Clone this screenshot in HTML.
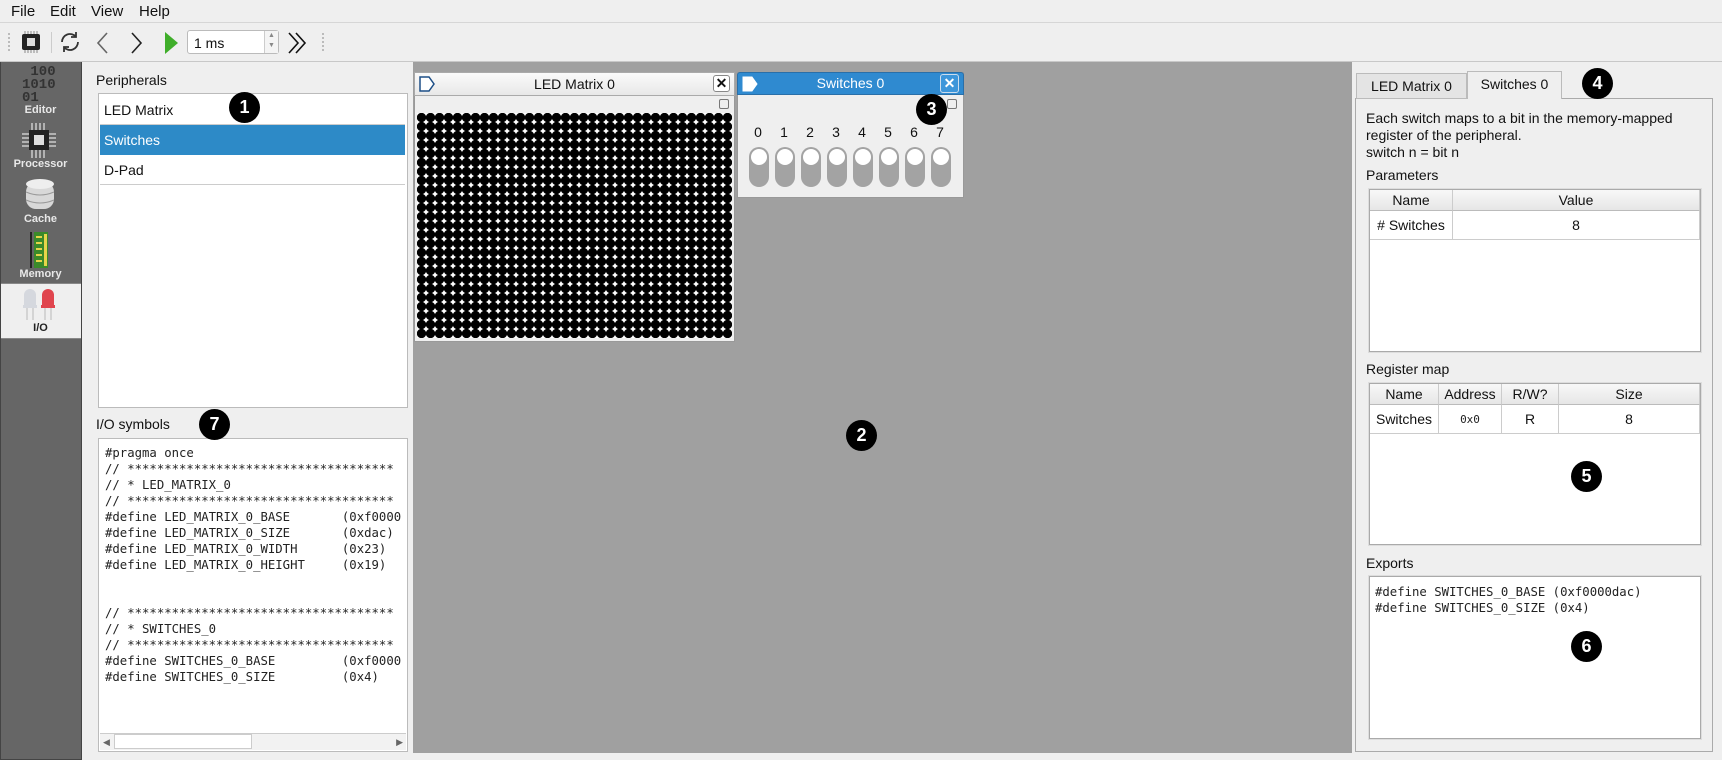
<!DOCTYPE html>
<html><head><meta charset="utf-8">
<style>
*{box-sizing:border-box;margin:0;padding:0}
body{width:1722px;height:760px;overflow:hidden;background:#efefef;font-family:"Liberation Sans",sans-serif;font-size:14px;color:#111;position:relative}
.a{position:absolute}
.mono{font-family:"DejaVu Sans Mono","Liberation Mono",monospace;font-size:12.3px;color:#222}
.circ{position:absolute;width:31px;height:31px;border-radius:50%;background:#000;color:#fff;font-weight:bold;font-size:18px;text-align:center;line-height:31px}
.sb{color:#e8e8e8;font-size:11px;font-weight:bold;text-align:center;width:81px;left:0}
.th{position:absolute;top:0;height:21px;background:linear-gradient(#f8f8f8,#e6e6e6);border-right:1px solid #ccc;border-bottom:1px solid #bbb;text-align:center;line-height:21px;font-size:14px}
.td{position:absolute;height:29px;border-right:1px solid #ccc;border-bottom:1px solid #ccc;text-align:center;line-height:29px;font-size:14px}
.sw{position:absolute;top:147px;width:20px;height:40px;border-radius:10px;background:#a3a3a3}
.sw::after{content:"";position:absolute;left:2px;top:2px;width:16px;height:16px;border-radius:50%;background:#fff}
.sl{position:absolute;top:124px;font-size:14px;width:12px;text-align:center}
</style></head><body>
<!-- menu -->
<div class="a" style="left:0;top:0;width:1722px;height:23px;background:#efefef;border-bottom:1px solid #d6d6d6"></div>
<div class="a" style="left:11px;top:3px;font-size:15px;word-spacing:0">File</div>
<div class="a" style="left:50px;top:3px;font-size:15px">Edit</div>
<div class="a" style="left:91px;top:3px;font-size:15px">View</div>
<div class="a" style="left:139px;top:3px;font-size:15px">Help</div>
<!-- toolbar -->
<div class="a" style="left:0;top:23px;width:1722px;height:39px;background:#efefef;border-bottom:1px solid #c8c8c8"></div>
<div class="a" style="left:8px;top:33px;width:2px;height:18px;border-left:2px dotted #bbb"></div>
<svg class="a" style="left:20px;top:29px" width="22" height="26" viewBox="0 0 22 26"><g stroke="#888" stroke-width="1"><path d="M5 2v4M8 2v4M11 2v4M14 2v4M17 2v4M5 20v4M8 20v4M11 20v4M14 20v4M17 20v4"/></g><rect x="2" y="5" width="18" height="16" rx="2" fill="#222"/><rect x="7" y="9" width="8" height="8" fill="#ddd"/></svg>
<div class="a" style="left:51px;top:32px;width:1px;height:21px;background:#ccc"></div>
<svg class="a" style="left:58px;top:30px" width="24" height="24" viewBox="0 0 24 24" fill="none" stroke="#333" stroke-width="1.8"><path d="M4 12a8 8 0 0 1 14-5.3M20 12a8 8 0 0 1-14 5.3"/><path d="M18 2v5h-5M6 22v-5h5"/></svg>
<svg class="a" style="left:95px;top:31px" width="16" height="24"><path d="M12 2L3 12l9 10" fill="none" stroke="#666" stroke-width="1.6"/></svg>
<svg class="a" style="left:128px;top:31px" width="16" height="24"><path d="M4 2l9 10-9 10" fill="none" stroke="#222" stroke-width="1.6"/></svg>
<svg class="a" style="left:164px;top:31px" width="16" height="24"><path d="M1 1L14 12 1 23z" fill="#3fae2a"/></svg>
<div class="a" style="left:187px;top:30px;width:92px;height:24px;background:#fff;border:1px solid #bbb;border-radius:3px;font-size:14px;padding:4px 6px">1 ms</div>
<div class="a" style="left:264px;top:31px;width:14px;height:22px;border-left:1px solid #ccc;background:#f4f4f4;font-size:7px;color:#888;text-align:center;line-height:10px">▲<br>▼</div>
<svg class="a" style="left:286px;top:31px" width="22" height="24" fill="none" stroke="#111" stroke-width="1.6"><path d="M3 2l9 10-9 10M10 2l9 10-9 10"/></svg>
<div class="a" style="left:322px;top:33px;width:2px;height:18px;border-left:2px dotted #bbb"></div>
<!-- sidebar -->
<div class="a" style="left:0;top:62px;width:82px;height:698px;background:#666;border:1px solid #444;border-top:none"></div>
<div class="a" style="left:1px;top:283px;width:80px;height:56px;background:#efefef;border-top:1px solid #888;border-bottom:1px solid #888"></div>
<div class="a" style="left:22px;top:66px;font-family:'Liberation Mono',monospace;font-weight:bold;font-size:14px;line-height:13px;color:#333">&nbsp;100<br>1010<br>01</div>
<div class="a sb" style="top:104px">Editor</div>
<svg class="a" style="left:20px;top:122px" width="38" height="36"><g stroke="#ccc" stroke-width="1.5"><path d="M12 1v8M16 1v8M20 1v8M24 1v8M12 28v8M16 28v8M20 28v8M24 28v8M2 12h8M2 16h8M2 20h8M2 24h8M28 12h8M28 16h8M28 20h8M28 24h8"/></g><rect x="9" y="8" width="20" height="20" fill="#222"/><rect x="14" y="13" width="10" height="10" fill="#ddd"/></svg>
<div class="a sb" style="top:158px">Processor</div>
<svg class="a" style="left:25px;top:178px" width="30" height="34"><rect x="1" y="4" width="28" height="27" rx="10" fill="#d8d8d8"/><ellipse cx="15" cy="6" rx="14" ry="5" fill="#eee"/><path d="M1 14q14 6 28 0M1 22q14 6 28 0" stroke="#999" fill="none"/></svg>
<div class="a sb" style="top:213px">Cache</div>
<svg class="a" style="left:30px;top:232px" width="22" height="38"><rect x="0" y="0" width="2" height="36" fill="#222"/><rect x="4" y="0" width="14" height="36" fill="#3a8a2a"/><g fill="#e6d44a"><rect x="6" y="4" width="6" height="2"/><rect x="6" y="10" width="6" height="2"/><rect x="6" y="16" width="6" height="2"/><rect x="6" y="22" width="6" height="2"/><rect x="6" y="28" width="6" height="2"/><rect x="14" y="2" width="3" height="32"/></g></svg>
<div class="a sb" style="top:268px">Memory</div>
<svg class="a" style="left:22px;top:287px" width="38" height="34"><path d="M2 18v-10a6 6 0 0 1 12 0v10z" fill="#d5d8de"/><rect x="1" y="18" width="14" height="3" fill="#d5d8de"/><path d="M5 21v12M11 21v12" stroke="#ccc" stroke-width="1.5"/><path d="M20 18v-10a6 6 0 0 1 12 0v10z" fill="#e0454e"/><rect x="19" y="18" width="14" height="3" fill="#e0454e"/><path d="M23 21v12M29 21v12" stroke="#ccc" stroke-width="1.5"/></svg>
<div class="a" style="left:0;top:322px;width:81px;text-align:center;font-size:11px;font-weight:bold;color:#222">I/O</div>
<!-- left panel -->
<div class="a" style="left:96px;top:72px;font-size:14px">Peripherals</div>
<div class="a" style="left:98px;top:93px;width:310px;height:315px;background:#fff;border:1px solid #bbb"></div>
<div class="a" style="left:100px;top:95px;width:305px;height:30px;border-bottom:1px solid #ccc;padding:7px 4px;font-size:14px">LED Matrix</div>
<div class="a" style="left:100px;top:125px;width:305px;height:30px;background:#2d8ac7;color:#fff;padding:7px 4px;font-size:14px">Switches</div>
<div class="a" style="left:100px;top:155px;width:305px;height:30px;border-bottom:1px solid #ccc;padding:7px 4px;font-size:14px">D-Pad</div>
<div class="a" style="left:96px;top:416px;font-size:14px">I/O symbols</div>
<div class="a" style="left:98px;top:438px;width:310px;height:314px;background:#fff;border:1px solid #bbb;overflow:hidden">
<pre class="mono" style="position:absolute;left:6px;top:6px;line-height:16px">#pragma once
// ************************************
// * LED_MATRIX_0
// ************************************
#define LED_MATRIX_0_BASE       (0xf0000
#define LED_MATRIX_0_SIZE       (0xdac)
#define LED_MATRIX_0_WIDTH      (0x23)
#define LED_MATRIX_0_HEIGHT     (0x19)


// ************************************
// * SWITCHES_0
// ************************************
#define SWITCHES_0_BASE         (0xf0000
#define SWITCHES_0_SIZE         (0x4)</pre>
<div class="a" style="left:1px;bottom:1px;width:306px;height:17px;background:#f2f2f2;border-top:1px solid #ccc"></div>
<div class="a" style="left:15px;bottom:2px;width:138px;height:15px;background:#fff;border:1px solid #ccc"></div>
<div class="a" style="left:4px;bottom:3px;font-size:9px;color:#666">◀</div>
<div class="a" style="right:4px;bottom:3px;font-size:9px;color:#666">▶</div>
</div>
<!-- MDI -->
<div class="a" style="left:413px;top:62px;width:939px;height:691px;background:#a0a0a0"></div>
<!-- LED window -->
<div class="a" style="left:414px;top:72px;width:321px;height:270px;background:#efefef;border:1px solid #999"></div>
<div class="a" style="left:414px;top:72px;width:321px;height:24px;background:linear-gradient(#fafafa,#e8e8e8);border:1px solid #aaa;text-align:center;line-height:22px;font-size:14px">LED Matrix 0</div>
<svg class="a" style="left:418px;top:75px" width="18" height="18"><path d="M2 2h9l5 7-5 7H2z" fill="#fff" stroke="#1d4f87" stroke-width="1.5"/></svg>
<div class="a" style="left:713px;top:75px;width:17px;height:17px;border:1px solid #888;border-radius:3px;background:#fff;text-align:center;font-weight:bold;font-size:14px;line-height:15px">✕</div>
<div class="a" style="left:719px;top:99px;width:10px;height:10px;border:1px solid #777;border-radius:2px"></div>
<div class="a" style="left:417px;top:113px;width:315px;height:225px;background:radial-gradient(circle at 4.5px 4.5px,#000 4.4px,#fff 4.9px);background-size:9px 9px"></div>
<!-- Switches window -->
<div class="a" style="left:737px;top:72px;width:227px;height:126px;background:#efefef;border:1px solid #999"></div>
<div class="a" style="left:737px;top:72px;width:227px;height:23px;background:#2f8ad0;border:1px solid #2a6fa8;border-radius:3px 3px 0 0;color:#fff;text-align:center;line-height:21px;font-size:14px">Switches 0</div>
<svg class="a" style="left:741px;top:75px" width="18" height="18"><path d="M2 2h9l5 7-5 7H2z" fill="#fff" stroke="#fff" stroke-width="1"/></svg>
<div class="a" style="left:940px;top:74px;width:19px;height:19px;border:1px solid #cde;border-radius:3px;background:#3d96da;color:#fff;text-align:center;font-weight:bold;font-size:14px;line-height:17px">✕</div>
<div class="a" style="left:947px;top:99px;width:10px;height:10px;border:1px solid #777;border-radius:2px"></div>
<div class="sl" style="left:752px">0</div><div class="sl" style="left:778px">1</div><div class="sl" style="left:804px">2</div><div class="sl" style="left:830px">3</div><div class="sl" style="left:856px">4</div><div class="sl" style="left:882px">5</div><div class="sl" style="left:908px">6</div><div class="sl" style="left:934px">7</div>
<div class="sw" style="left:749px"></div><div class="sw" style="left:775px"></div><div class="sw" style="left:801px"></div><div class="sw" style="left:827px"></div><div class="sw" style="left:853px"></div><div class="sw" style="left:879px"></div><div class="sw" style="left:905px"></div><div class="sw" style="left:931px"></div>
<!-- right panel -->
<div class="a" style="left:1355px;top:98px;width:358px;height:654px;border:1px solid #aaa;background:#efefef"></div>
<div class="a" style="left:1356px;top:73px;width:111px;height:26px;border:1px solid #bbb;background:#e4e4e4;text-align:center;line-height:25px;font-size:14px">LED Matrix 0</div>
<div class="a" style="left:1467px;top:71px;width:95px;height:28px;border:1px solid #bbb;border-bottom:none;background:#efefef;text-align:center;line-height:25px;font-size:14px">Switches 0</div>
<div class="a" style="left:1366px;top:110px;font-size:14px;line-height:17px">Each switch maps to a bit in the memory-mapped<br>register of the peripheral.<br>switch n = bit n</div>
<div class="a" style="left:1366px;top:167px;font-size:14px">Parameters</div>
<div class="a" style="left:1368px;top:188px;width:334px;height:165px;background:#fff;border:2px solid #ddd;outline:1px solid #aaa;outline-offset:-2px">
<div class="th" style="left:0;width:83px">Name</div><div class="th" style="left:83px;width:247px">Value</div>
<div class="td" style="left:0;top:21px;width:83px">#&nbsp;Switches</div><div class="td" style="left:83px;top:21px;width:247px">8</div>
</div>
<div class="a" style="left:1366px;top:361px;font-size:14px">Register map</div>
<div class="a" style="left:1368px;top:382px;width:334px;height:164px;background:#fff;border:2px solid #ddd;outline:1px solid #aaa;outline-offset:-2px">
<div class="th" style="left:0;width:69px">Name</div><div class="th" style="left:69px;width:63px">Address</div><div class="th" style="left:132px;width:57px">R/W?</div><div class="th" style="left:189px;width:141px">Size</div>
<div class="td" style="left:0;top:21px;width:69px">Switches</div><div class="td mono" style="left:69px;top:21px;width:63px;font-size:11px">0x0</div><div class="td" style="left:132px;top:21px;width:57px">R</div><div class="td" style="left:189px;top:21px;width:141px">8</div>
</div>
<div class="a" style="left:1366px;top:555px;font-size:14px">Exports</div>
<div class="a" style="left:1368px;top:575px;width:334px;height:165px;background:#fff;border:2px solid #ddd;outline:1px solid #aaa;outline-offset:-2px">
<pre class="mono" style="position:absolute;left:5px;top:7px;line-height:16px">#define SWITCHES_0_BASE (0xf0000dac)
#define SWITCHES_0_SIZE (0x4)</pre>
</div>
<!-- annotations -->
<div class="circ" style="left:229px;top:92px">1</div>
<div class="circ" style="left:846px;top:420px">2</div>
<div class="circ" style="left:916px;top:94px">3</div>
<div class="circ" style="left:1582px;top:68px">4</div>
<div class="circ" style="left:1571px;top:461px">5</div>
<div class="circ" style="left:1571px;top:631px">6</div>
<div class="circ" style="left:199px;top:409px">7</div>
</body></html>
